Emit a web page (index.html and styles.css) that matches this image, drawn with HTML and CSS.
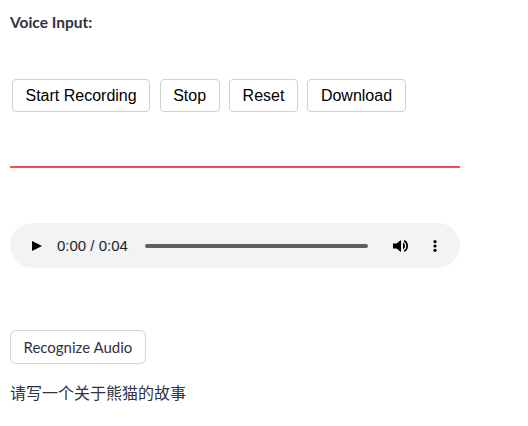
FILE: index.html
```html
<!DOCTYPE html>
<html>
<head>
<meta charset="utf-8">
<link rel="stylesheet" href="styles.css">
</head>
<body>
<div class="page">
  <div class="label">Voice Input:</div>
  <div class="recorder">
    <div class="btn-row">
      <button class="rec-btn">Start Recording</button>
      <button class="rec-btn">Stop</button>
      <button class="rec-btn">Reset</button>
      <button class="rec-btn">Download</button>
    </div>
  </div>
  <div class="divider"></div>
  <div class="audio">
    <svg class="play" width="12" height="12" viewBox="0 0 12 12"><path d="M1 1 L11 6 L1 11 Z" fill="#000"/></svg>
    <span class="time">0:00 / 0:04</span>
    <div class="track"></div>
    <svg class="vol" width="18" height="12" viewBox="0 0 18 12"><path d="M0 3.5 H3.5 L8 0 V12 L3.5 8.5 H0 Z" fill="#000"/><path d="M10 2.5 A4 4 0 0 1 10 9.5 Z" fill="#000"/><path d="M11.2 0.8 A6 6 0 0 1 11.2 11.2" fill="none" stroke="#000" stroke-width="1.6"/></svg>
    <svg class="dots" width="4" height="12" viewBox="0 0 4 12"><circle cx="2" cy="1.7" r="1.6" fill="#000"/><circle cx="2" cy="6" r="1.6" fill="#000"/><circle cx="2" cy="10.3" r="1.6" fill="#000"/></svg>
  </div>
  <button class="st-btn">Recognize Audio</button>
  <p class="result">请写一个关于熊猫的故事</p>
</div>
</body>
</html>
```
FILE: styles.css
```css
html, body {
  margin: 0;
  padding: 0;
  background: #fff;
}
.page {
  padding: 0 10px;
  font-family: Lato, "Noto Sans", "Noto Sans CJK SC", sans-serif;
  color: #31333f;
}
.label {
  font-size: 15.5px;
  font-weight: 700;
  line-height: 20px;
  padding-top: 12px;
}
.recorder {
  padding: 47px 0 0 2px;
}
.btn-row {
  display: flex;
  gap: 9.5px;
}
.rec-btn {
  font-family: "Liberation Sans", Arial, sans-serif;
  font-size: 16px;
  line-height: 18px;
  color: #000;
  background: #fff;
  border: 1px solid #d0d0d0;
  border-radius: 4px;
  padding: 7px 12.5px 6px;
  margin: 0;
}
.divider {
  width: 450px;
  height: 2px;
  background: #ff4b4b;
  margin-top: 54px;
}
.audio {
  width: 450px;
  height: 45px;
  margin-top: 55px;
  background: #f1f3f4;
  border-radius: 23px;
  display: flex;
  align-items: center;
  box-sizing: border-box;
  padding: 0 0 0 21px;
}
.play {
  display: block;
}
.time {
  font-family: "Liberation Sans", Arial, sans-serif;
  font-size: 15px;
  color: #1f1f1f;
  margin-left: 14px;
}
.track {
  width: 223px;
  height: 4px;
  background: #5f5f5f;
  border-radius: 2px;
  margin-left: 17px;
}
.vol {
  display: block;
  margin-left: 25px;
}
.dots {
  display: block;
  margin-left: 22px;
}
.st-btn {
  display: block;
  margin-top: 62px;
  font-family: Lato, "Noto Sans", sans-serif;
  font-size: 15px;
  line-height: 20px;
  color: #31333f;
  background: #fff;
  border: 1px solid rgba(49, 51, 63, 0.2);
  border-radius: 6px;
  padding: 6px 12.5px;
}
.result {
  margin: 16px 0 0;
  font-family: "Noto Sans CJK SC", sans-serif;
  font-size: 16px;
  line-height: 24px;
  color: #31333f;
}
```
